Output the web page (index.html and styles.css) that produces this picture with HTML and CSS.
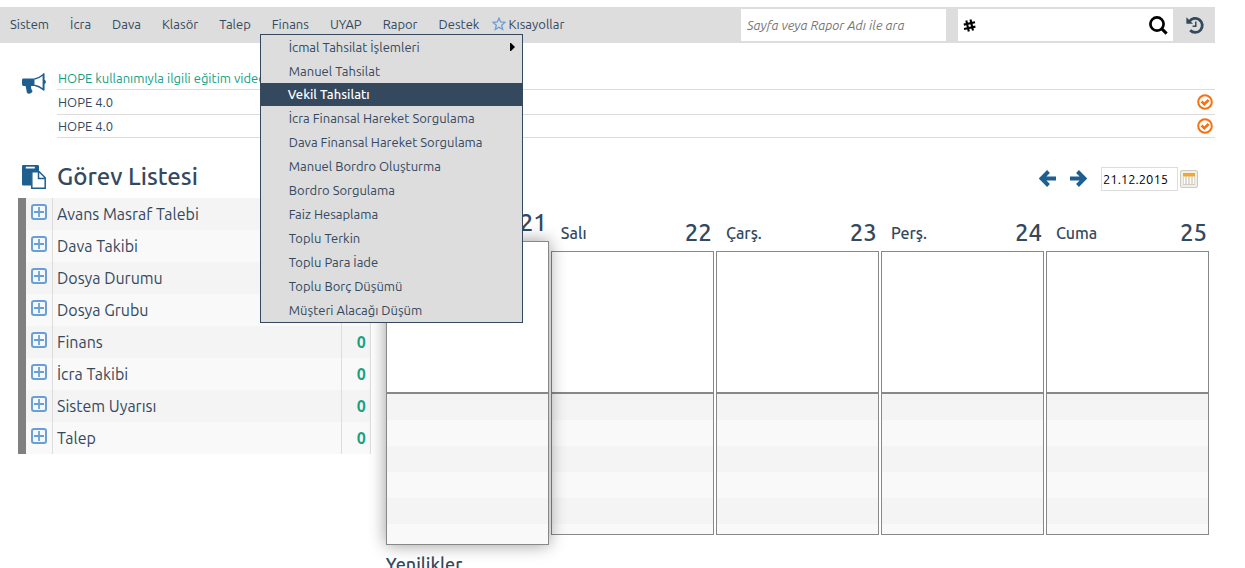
FILE: index.html
```html
<!DOCTYPE html>
<html lang="tr">
<head>
<meta charset="utf-8">
<title>Görev Listesi</title>
<link rel="stylesheet" href="styles.css">
</head>
<body>
<svg class="defs" aria-hidden="true">
  <symbol id="plus" viewBox="0 0 16 16"><rect x="1" y="1" width="14" height="14" rx="2" fill="#f4f8fc" stroke="#6a9fd4" stroke-width="2"/><path d="M8 3v10M3 8h10" stroke="#6a9fd4" stroke-width="1.8"/></symbol>
  <symbol id="check" viewBox="0 0 16 16"><circle cx="8" cy="8" r="6.8" fill="none" stroke="#f87010" stroke-width="2"/><path d="M4.500 7.500 7.300 10.200 11.600 6" fill="none" stroke="#f87010" stroke-width="2.600"/></symbol>
</svg>
<header class="topbar">
  <nav aria-label="Ana menü">
    <ul class="nav">
      <li><a href="#">Sistem</a></li>
      <li><a href="#">İcra</a></li>
      <li><a href="#">Dava</a></li>
      <li><a href="#">Klasör</a></li>
      <li><a href="#">Talep</a></li>
      <li class="open"><a href="#">Finans</a>
        <ul class="menu">
          <li><a href="#">İcmal Tahsilat İşlemleri<svg class="caret" viewBox="0 0 5 8"><path d="M0 0h1l4 4-4 4H0z"/></svg></a></li>
          <li><a href="#">Manuel Tahsilat</a></li>
          <li><a class="active" href="#">Vekil Tahsilatı</a></li>
          <li><a href="#">İcra Finansal Hareket Sorgulama</a></li>
          <li><a href="#">Dava Finansal Hareket Sorgulama</a></li>
          <li><a href="#">Manuel Bordro Oluşturma</a></li>
          <li><a href="#">Bordro Sorgulama</a></li>
          <li><a href="#">Faiz Hesaplama</a></li>
          <li><a href="#">Toplu Terkin</a></li>
          <li><a href="#">Toplu Para İade</a></li>
          <li><a href="#">Toplu Borç Düşümü</a></li>
          <li><a href="#">Müşteri Alacağı Düşüm</a></li>
        </ul>
      </li>
      <li><a href="#">UYAP</a></li>
      <li><a href="#">Rapor</a></li>
      <li><a href="#">Destek</a></li>
      <li class="shortcuts"><a href="#"><svg class="star" viewBox="0 0 14 14"><path d="M7 1.200 8.700 5l4.200.4-3.200 2.800 1 4.200L7 10.200l-3.700 2.200 1-4.200L1.100 5.400 5.300 5z" fill="none" stroke="#6a9fd4" stroke-width="1.300"/></svg>Kısayollar</a></li>
    </ul>
  </nav>
  <div class="tools">
    <input class="page-search" type="text" aria-label="Sayfa ara" placeholder="Sayfa veya Rapor Adı ile ara">
    <div class="record-search">
      <svg class="hash" viewBox="0 0 13 13"><path d="M3.300 1.500 5.800 12.400M7.500.600 10 11.500M.8 5.600 12 3.200M1 10 12.400 7.600" fill="none" stroke="#000" stroke-width="2.100"/></svg>
      <input type="text" aria-label="Kayıt numarası">
      <button type="button" aria-label="Ara"><svg class="lens" viewBox="0 0 19 19"><circle cx="8" cy="8" r="6.600" fill="none" stroke="#000" stroke-width="2.700"/><path d="m12.600 12.600 5 5" stroke="#000" stroke-width="3"/></svg></button>
    </div>
    <button class="history" type="button" aria-label="Geçmiş"><svg viewBox="0 0 18 18"><path d="M3.400 5.600A7 7 0 1 1 4.200 14.200" fill="none" stroke="#34495e" stroke-width="2.800"/><path d="M.4 1.200v6.600H7z" fill="#34495e"/><path d="M9.800 5.400v4.900H6.600" fill="none" stroke="#34495e" stroke-width="1.500"/></svg></button>
  </div>
</header>

<section class="news">
  <svg class="horn" viewBox="0 0 24 21"><path d="M1 5.500h12v7.500H9.200c-.4 2 .2 3.600 1.400 5-1 2.800-4 3.200-5.600 2L3.600 13H1q-1-1-1-2V6.700q.2-1 1-1.200z" fill="#1f5f8f"/><path d="M12.500 6.100Q17 5.200 21.500 1.500v15.200Q17 13 12.500 12.300" fill="#fff" stroke="#1f5f8f" stroke-width="1.500"/><path d="M20.800.5h1.600v6.200q1.500.6 1.500 2.200t-1.500 2.200v6h-1.600z" fill="#1f5f8f"/></svg>
  <ul>
    <li><a class="lead" href="#">HOPE kullanımıyla ilgili eğitim videoları</a></li>
    <li><span>HOPE 4.0</span><button type="button" aria-label="Okundu"><svg><use href="#check"/></svg></button></li>
    <li><span>HOPE 4.0</span><button type="button" aria-label="Okundu"><svg><use href="#check"/></svg></button></li>
  </ul>
</section>

<main>
  <section class="tasks">
    <h1><svg viewBox="0 0 24 24"><path d="M1.200 0h14.600q1.200 0 1.200 1.200V7h-5.500Q9 8 9 10v10.500H1.200Q0 20.500 0 19.300V1.200Q0 0 1.200 0z" fill="#1f5f8f"/><path d="M3.800 1.700h9v1.800h-9z" fill="#fff"/><path d="M10.500 6.800h6.700l6 6v10.400H9.800V7.500zM16.500 7v6.500H23" fill="#fff" stroke="#1f5f8f" stroke-width="1.500"/></svg>Görev Listesi</h1>
    <table>
      <tbody>
        <tr><td><button type="button" aria-label="Aç"><svg><use href="#plus"/></svg></button></td><th scope="row">Avans Masraf Talebi</th><td>0</td></tr>
        <tr><td><button type="button" aria-label="Aç"><svg><use href="#plus"/></svg></button></td><th scope="row">Dava Takibi</th><td>0</td></tr>
        <tr><td><button type="button" aria-label="Aç"><svg><use href="#plus"/></svg></button></td><th scope="row">Dosya Durumu</th><td>0</td></tr>
        <tr><td><button type="button" aria-label="Aç"><svg><use href="#plus"/></svg></button></td><th scope="row">Dosya Grubu</th><td>0</td></tr>
        <tr><td><button type="button" aria-label="Aç"><svg><use href="#plus"/></svg></button></td><th scope="row">Finans</th><td>0</td></tr>
        <tr><td><button type="button" aria-label="Aç"><svg><use href="#plus"/></svg></button></td><th scope="row">İcra Takibi</th><td>0</td></tr>
        <tr><td><button type="button" aria-label="Aç"><svg><use href="#plus"/></svg></button></td><th scope="row">Sistem Uyarısı</th><td>0</td></tr>
        <tr><td><button type="button" aria-label="Aç"><svg><use href="#plus"/></svg></button></td><th scope="row">Talep</th><td>0</td></tr>
      </tbody>
    </table>
  </section>

  <section class="agenda">
    <div class="datebar">
      <button class="arrow" type="button" aria-label="Önceki hafta"><svg viewBox="0 0 17 18"><path d="M9.500 1.500 2.500 8.500l7 7M3 8.500h14" fill="none" stroke="#1f5f8f" stroke-width="4"/></svg></button>
      <button class="arrow" type="button" aria-label="Sonraki hafta"><svg viewBox="0 0 17 18"><path d="M7.500 1.500l7 7-7 7M14 8.500H0" fill="none" stroke="#1f5f8f" stroke-width="4"/></svg></button>
      <input type="text" aria-label="Tarih" value="21.12.2015">
      <button class="picker" type="button" aria-label="Takvim"><svg viewBox="0 0 18 18"><rect x=".5" y=".5" width="17" height="17" rx="1.500" fill="#f1eee8" stroke="#cfcabd"/><path d="M3 3h12v3.500H3z" fill="#f0a830"/><path d="M3 7h12v8H3z" fill="#d2cec6"/><path d="M4.500 7v7M7.500 7v7M10.500 7v7M13.500 7v7" stroke="#fff" stroke-width="1.500"/></svg></button>
    </div>
    <div class="week">
      <article class="day today"><h2>Pzt. <b>21</b></h2><div class="slots"></div><div class="list"></div></article>
      <article class="day"><h2>Salı <b>22</b></h2><div class="slots"></div><div class="list"></div></article>
      <article class="day"><h2>Çarş. <b>23</b></h2><div class="slots"></div><div class="list"></div></article>
      <article class="day"><h2>Perş. <b>24</b></h2><div class="slots"></div><div class="list"></div></article>
      <article class="day"><h2>Cuma <b>25</b></h2><div class="slots"></div><div class="list"></div></article>
    </div>
    <h2 class="updates">Yenilikler</h2>
  </section>
</main>
</body>
</html>
```
FILE: styles.css
```css
* { box-sizing: border-box; }
html { overflow: hidden; }
body {
  margin: 7px 0 0;
  background: #fff;
  color: #34495e;
  font: 13px/24px Ubuntu, "Noto Sans", sans-serif;
}
ul { margin: 0; padding: 0; list-style: none; }
a { color: inherit; text-decoration: none; }
button { padding: 0; border: 0; background: none; color: inherit; font: inherit; }
input { min-width: 0; margin: 0; border: 0; font: inherit; }
svg { display: block; flex: none; }
.defs { display: none; }

.topbar {
  display: flex;
  justify-content: space-between;
  height: 36px;
  margin-right: 30px;
  background: #ddd;
}
.nav { display: flex; gap: 1px; }
.nav > li { padding: 5px 10px 0; }
.nav > .shortcuts { padding-left: 2px; }
.shortcuts a { display: flex; align-items: center; gap: 2px; }
.star { width: 14px; height: 14px; }
.open { position: relative; }
.menu {
  position: absolute;
  z-index: 5;
  top: 27px;
  left: -2px;
  width: 263px;
  border: 1px solid #34495e;
  background: #ddd;
}
.menu a {
  display: flex;
  align-items: center;
  justify-content: space-between;
  height: 24px;
  padding: 0 7px 0 28px;
}
.menu .active {
  height: 23px;
  padding: 0 7px 1px 27px;
  background: #34495e;
  color: #fff;
  font-weight: 500;
}
.caret { width: 5px; height: 8px; fill: #000; }
.tools { display: flex; padding: 2px 11px 2px 0; }
.page-search { width: 205px; margin-right: 12px; padding: 0 6px; background: #fff; }
.page-search::placeholder { color: #757575; font-style: italic; opacity: 1; }
.record-search {
  display: flex;
  align-items: center;
  width: 215px;
  margin-right: 13px;
  padding: 0 5px;
  background: #fff;
}
.record-search input { flex: 1; }
.hash { width: 13px; height: 13px; }
.lens { width: 19px; height: 19px; }
.history svg { width: 18px; height: 18px; }

.news { display: flex; gap: 11px; margin: 23px 30px 0 22px; }
.news ul { flex: 1; }
.horn { width: 24px; height: 21px; margin-top: 7px; }
.news li {
  display: flex;
  align-items: center;
  justify-content: space-between;
  height: 25px;
  padding: 0 2px 0 1px;
  border-bottom: 1px solid #ddd;
}
.news li:first-child { height: 24px; }
.news li:last-child { height: 23px; }
.news button svg { width: 16px; height: 16px; }
.lead { color: #16a085; }

main {
  display: grid;
  grid-template-columns: 3fr 7fr;
  gap: 15px;
  margin: 25px 36px 0 18px;
}
.tasks h1 {
  display: flex;
  align-items: center;
  gap: 11px;
  height: 28px;
  margin: 0 0 7px 4px;
  font-size: 24px;
  font-weight: 500;
}
.tasks h1 svg { width: 24px; height: 24px; }
.tasks table {
  width: 100%;
  border-left: 8px solid #808080;
  border-collapse: separate;
  border-spacing: 0;
  font-size: 16px;
}
.tasks tr { height: 32px; background: #f4f4f4; }
.tasks tr:nth-child(even) { background: #f9f9f9; }
.tasks td, .tasks th { padding: 0 4px; border-right: 1px solid #ddd; }
.tasks th { font-weight: 400; text-align: left; }
.tasks td:first-child { width: 27px; padding: 0 5px; }
.tasks td:last-child {
  width: 29px;
  color: #16a085;
  font-weight: 700;
  text-align: right;
}
.tasks button { display: block; margin-bottom: 4px; }
.tasks button svg { width: 16px; height: 16px; }

.datebar {
  display: flex;
  align-items: center;
  justify-content: flex-end;
  height: 24px;
  margin: 4px 11px 0 0;
}
.arrow { margin-right: 14px; }
.arrow svg { width: 17px; height: 18px; }
.datebar input {
  width: 77px;
  height: 24px;
  margin-right: 2px;
  padding: 0 1px;
  border: 1px solid #ddd;
  color: #000;
}
.picker svg { width: 18px; height: 18px; }
.week { display: grid; grid-template-columns: repeat(5, 1fr); gap: 2px; align-items: start; margin-top: 10px; }
.day { margin: 10px 0; }
.day h2 {
  display: flex;
  align-items: center;
  justify-content: space-between;
  height: 40px;
  margin: 0;
  padding: 3px 2px 0 10px;
  font-size: 16px;
  font-weight: 500;
}
.day b { font-size: 24px; font-weight: 500; }
.slots { height: 142px; border: 1px solid #888; background: #fff; }
.list {
  height: 142px;
  border: 1px solid #888;
  background: repeating-linear-gradient(#f4f4f4 0 26px, #f9f9f9 26px 52px);
}
.today { position: relative; margin: 0; }
.today .slots, .today .list { height: 152px; }
.today::after {
  content: "";
  position: absolute;
  inset: 40px 0 0;
  box-shadow: 0 0 16px rgba(0, 0, 0, 0.4);
  pointer-events: none;
}
.updates { margin: 7px 0 0; font-size: 18px; font-weight: 500; }
```
